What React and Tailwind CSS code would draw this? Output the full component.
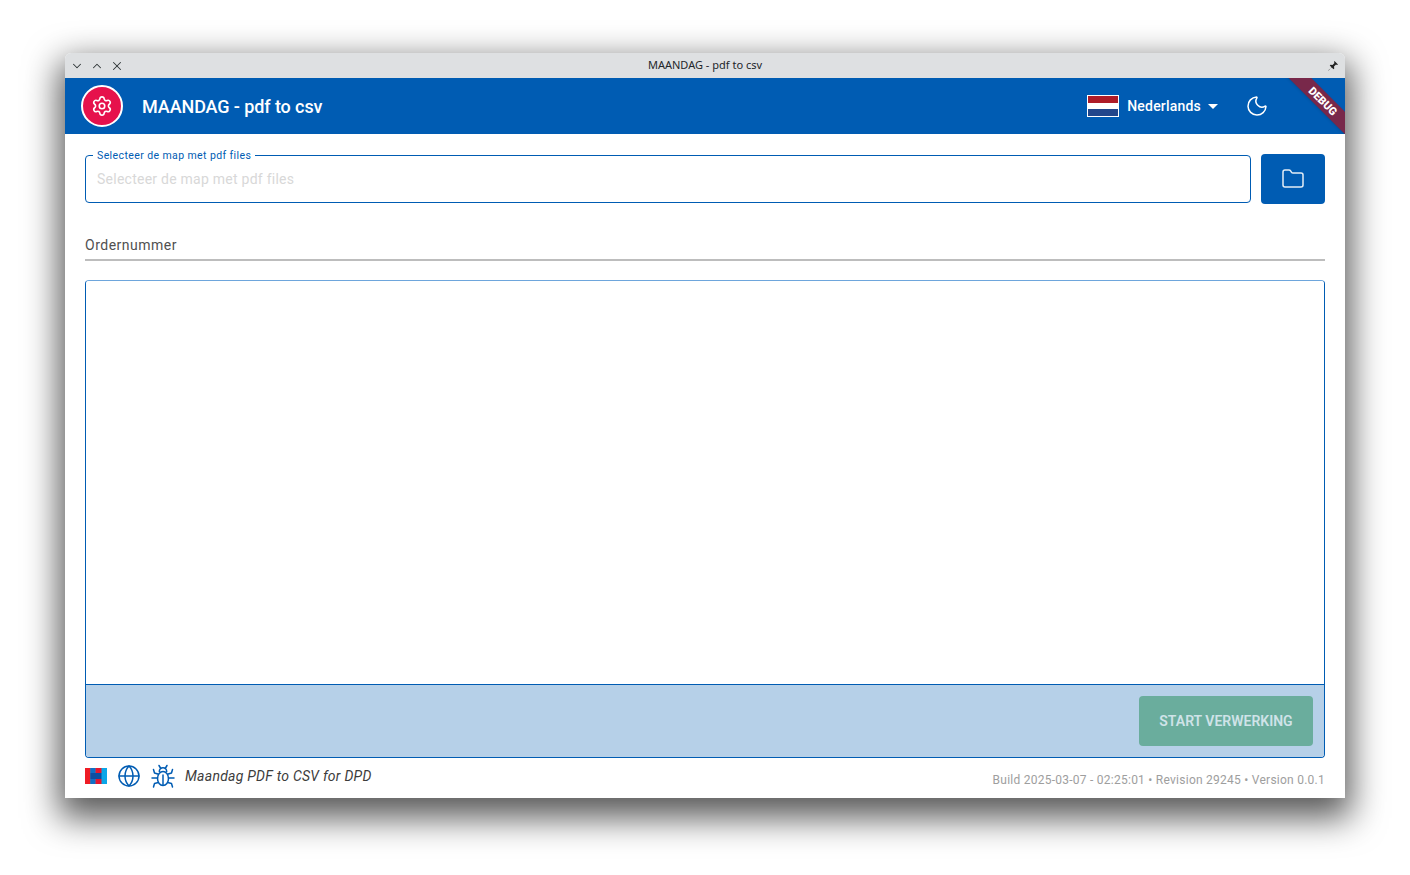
import { Folder, Moon, Globe, Settings, ChevronDown, ChevronUp, X } from "lucide-react";

const TitleBar = () => (
  <div className="h-[25px] shrink-0 bg-[#dee0e2] rounded-t-[6px] flex items-center justify-between pl-[5px] pr-[6px] relative">
    <div className="flex items-center gap-[6px] text-[#2e3436]">
      <ChevronDown className="w-[14px] h-[14px]" strokeWidth={1.75} />
      <ChevronUp className="w-[14px] h-[14px]" strokeWidth={1.75} />
      <X className="w-[14px] h-[14px]" strokeWidth={1.75} />
    </div>
    <div className="absolute inset-x-0 top-0 h-full flex items-center justify-center text-[11px] text-[#23272a] font-['Noto_Sans',sans-serif]">
      MAANDAG - pdf to csv
    </div>
    {/* pin */}
    <svg viewBox="0 0 24 24" className="w-[12px] h-[12px] text-[#222] fill-current">
      <path d="M15 2 22 9 20 10 18 9 14 13 14.500 17 13 18.500 9 14.500 3.500 21 2.500 20.500 9.500 15 5.500 11 7 9.500 11 10 15 6 14 4Z" />
    </svg>
  </div>
);

const AppBar = () => (
  <div className="h-[56px] shrink-0 bg-[#005cb3] flex items-center pl-[16px] pr-[76px] relative overflow-hidden">
    <div className="w-[42px] h-[42px] rounded-full bg-[#e6114c] border-2 border-white flex items-center justify-center shrink-0">
      <Settings className="w-[22px] h-[22px] text-white" strokeWidth={1.75} />
    </div>
    <div className="ml-[19px] text-[18px] font-medium tracking-[-0.1px] text-white">MAANDAG - pdf to csv</div>
    <div className="ml-auto flex items-center">
      <div className="w-[32px] h-[22px] border border-white flex flex-col">
        <div className="flex-1 bg-[#ae1c28]"></div>
        <div className="flex-1 bg-white"></div>
        <div className="flex-1 bg-[#21468b]"></div>
      </div>
      <span className="ml-[8px] text-[14px] font-medium tracking-[0.2px] text-white">Nederlands</span>
      <div className="ml-[7px] w-0 h-0 border-x-[5px] border-x-transparent border-t-[5px] border-t-white"></div>
      <Moon className="ml-[27px] w-[24px] h-[24px] text-white -scale-x-100 rotate-[90deg]" strokeWidth={1.5} />
    </div>
    {/* debug banner */}
    <div className="absolute top-[15px] right-[-28px] w-[100px] h-[16px] pt-[1px] bg-[#78284a] rotate-45 flex items-center justify-center text-[11px] leading-none font-black text-white shadow-sm">
      DEBUG
    </div>
  </div>
);

const PathField = () => (
  <div className="flex gap-[10px] items-center">
    <div className="relative flex-1 h-[48px] border border-[#005cb3] rounded-[4px] flex items-center px-[11px]">
      <span className="absolute left-[7px] -top-[7px] bg-white px-[4px] text-[10.500px] leading-[13px] tracking-[0.4px] text-[#005cb3]">
        Selecteer de map met pdf files
      </span>
      <span className="text-[14px] tracking-[0.25px] text-[#d8d8d8]">Selecteer de map met pdf files</span>
    </div>
    <button className="w-[64px] h-[50px] bg-[#005cb3] rounded-[4px] flex items-center justify-center">
      <Folder className="w-[24px] h-[24px] text-[#e3edf6]" strokeWidth={1.5} />
    </button>
  </div>
);

const BugIcon = () => (
  <svg viewBox="0 0 24 24" fill="none" stroke="currentColor" strokeWidth="1.500" strokeLinecap="round" strokeLinejoin="round" className="ml-[10px] w-[24px] h-[24px] text-[#005cb3]">
    <path d="M8 1.500 9.800 4.500M16 1.500 14.200 4.500" />
    <path d="M8.300 7.500a3.700 3.700 0 0 1 7.400 0" />
    <ellipse cx="12" cy="14.500" rx="5.500" ry="7" />
    <path d="M12 11v10" />
    <path d="M6.800 10 3.500 9 2.500 5.500M17.200 10 20.500 9 21.500 5.500" />
    <path d="M6.500 14H1M17.500 14H23" />
    <path d="M7.300 18.500 3.500 19.500 2.500 23M16.700 18.500 20.500 19.500 21.500 23" />
  </svg>
);

const Footer = () => (
  <div className="flex items-center h-[36px] relative">
    <svg viewBox="0 0 22 16" className="w-[22px] h-[16px] shrink-0">
      <rect width="22" height="16" fill="#0aa6e8" />
      <rect width="5.500" height="16" fill="#ee1c25" />
      <rect x="5.500" width="5" height="16" fill="#0f6fc6" />
      <rect x="5.500" y="5" width="11" height="6" fill="#0b4ea2" />
      <rect x="10.500" width="6" height="5" fill="#e4162f" />
      <rect x="10.500" y="11" width="6" height="5" fill="#e4162f" />
    </svg>
    <Globe className="ml-[10px] w-[24px] h-[24px] text-[#005cb3]" strokeWidth={1.5} />
    <BugIcon />
    <span className="ml-[10px] text-[14px] italic tracking-[0.25px] text-[#3c3c3c]">Maandag PDF to CSV for DPD</span>
    <span className="ml-auto mt-[8px] text-[12px] tracking-[0.25px] text-[#9e9e9e]">
      Build 2025-03-07 - 02:25:01 • Revision 29245 • Version 0.0.1
    </span>
  </div>
);

const App = () => {
  return (
    <div className="w-[1410px] h-[875px] bg-white pt-[53px] px-[65px] font-['Roboto',sans-serif] overflow-hidden">
      <div className="w-[1280px] h-[745px] bg-white rounded-t-[6px] shadow-[0_14px_34px_6px_rgba(0,0,0,0.65)] flex flex-col">
        <TitleBar />
        <AppBar />
        <div className="flex-1 flex flex-col px-[20px] pt-[20px]">
          <PathField />
          <div className="mt-[30px] h-[27px] pt-[1px] border-b-2 border-[#bdbdbd] text-[14px] tracking-[0.5px] text-[#505050] leading-[20px]">
            Ordernummer
          </div>
          <div className="mt-[19px] h-[478px] shrink-0 border border-[#005cb3] border-t-[#6ea6dc] rounded-[4px] flex flex-col overflow-hidden">
            <div className="flex-1 bg-white border-b border-[#005cb3]"></div>
            <div className="h-[72px] bg-[#b6d0e8] flex items-center justify-end pr-[11px]">
              <button className="w-[174px] h-[50px] bg-[#6aad9d] rounded-[4px] text-[14px] font-semibold text-[#cfe3e8]">
                START VERWERKING
              </button>
            </div>
          </div>
          <Footer />
        </div>
      </div>
    </div>
  );
};

export default App;
